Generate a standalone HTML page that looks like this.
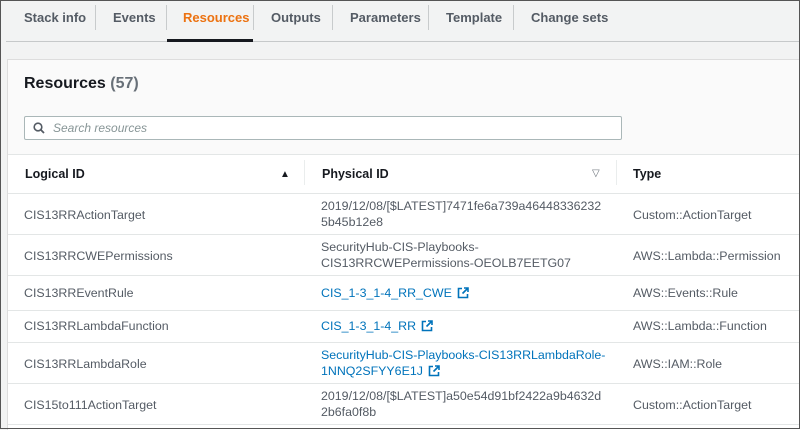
<html><head><style>
body{margin:0;width:800px;height:429px;overflow:hidden;background:#f2f3f3;font-family:"Liberation Sans",sans-serif;position:relative}
.frame{position:absolute;left:0;top:0;width:798px;height:427px;border:1px solid #555;}
.tab{position:absolute;top:10px;font-size:13px;font-weight:bold;color:#545b64}
.sep{position:absolute;top:5px;width:1px;height:25px;background:#c8cbcc}
.card{position:absolute;left:7px;top:59px;width:793px;height:370px;background:#fff;border-left:1px solid #ddd;border-top:1px solid #ddd}
.hdr{position:absolute;left:0;top:0;width:793px;height:95px;background:#fafafa}
.t{position:absolute;font-size:12.4px;color:#545b64;line-height:16px}
.a{color:#0073bb}
.h{position:absolute;font-size:12.5px;font-weight:bold;color:#16191f;top:107px}
.line{position:absolute;left:0;width:793px;height:1px;background:#e3e6e6}
svg.ext{vertical-align:-2px;margin-left:5px}
</style></head><body>
<div class="tab" style="left:24px">Stack info</div><div class="sep" style="left:95px"></div>
<div class="tab" style="left:113px">Events</div><div class="sep" style="left:166px"></div>
<div class="tab" style="left:183px;color:#ec7211">Resources</div><div class="sep" style="left:253px"></div>
<div class="tab" style="left:271px">Outputs</div><div class="sep" style="left:332px"></div>
<div class="tab" style="left:350px">Parameters</div><div class="sep" style="left:428px"></div>
<div class="tab" style="left:446px">Template</div><div class="sep" style="left:513px"></div>
<div class="tab" style="left:531px">Change sets</div>
<div style="position:absolute;left:6px;top:41px;width:794px;height:1px;background:#c6c9ca"></div>
<div style="position:absolute;left:167px;top:39px;width:86px;height:3px;background:#16191f"></div>
<div class="card">
<div class="hdr"></div>
<div style="position:absolute;left:16px;top:15px;font-size:16px;font-weight:bold;color:#16191f">Resources <span style="color:#687078">(57)</span></div>
<div style="position:absolute;left:16px;top:56px;width:596px;height:22px;border:1px solid #aab7b8;background:#fff;border-radius:2px">
<svg style="position:absolute;left:8px;top:5px" width="12" height="12" viewBox="0 0 12 12"><circle cx="5" cy="5" r="3.8" fill="none" stroke="#545b64" stroke-width="1.6"/><path d="M8 8l3 3" stroke="#545b64" stroke-width="1.8"/></svg>
<span style="position:absolute;left:28px;top:4px;font-size:12px;font-style:italic;color:#879596">Search resources</span></div>
<div class="line" style="top:94px"></div>
<div class="h" style="left:17px">Logical ID</div>
<div style="position:absolute;left:272px;top:109px;font-size:10px;color:#16191f">▲</div>
<div style="position:absolute;left:296px;top:100px;width:1px;height:25px;background:#eaeded"></div>
<div class="h" style="left:314px">Physical ID</div>
<div style="position:absolute;left:584px;top:108px;font-size:10px;color:#687078">▽</div>
<div style="position:absolute;left:608px;top:100px;width:1px;height:25px;background:#eaeded"></div>
<div class="h" style="left:625px">Type</div>
<div class="line" style="top:133px"></div>
<div class="t" style="left:16px;top:147px">CIS13RRActionTarget</div>
<div class="t" style="left:313px;top:138px">2019/12/08/[$LATEST]7471fe6a739a46448336232<br>5b45b12e8</div>
<div class="t" style="left:625px;top:147px">Custom::ActionTarget</div>
<div class="line" style="top:174px"></div>
<div class="t" style="left:16px;top:188px">CIS13RRCWEPermissions</div>
<div class="t" style="left:313px;top:179px">SecurityHub-CIS-Playbooks-<br>CIS13RRCWEPermissions-OEOLB7EETG07</div>
<div class="t" style="left:625px;top:188px">AWS::Lambda::Permission</div>
<div class="line" style="top:215px"></div>
<div class="t" style="left:16px;top:225px">CIS13RREventRule</div>
<div class="t a" style="left:313px;top:225px">CIS_1-3_1-4_RR_CWE<svg class="ext" width="12" height="12" viewBox="0 0 12 12"><path d="M5 1.5H1.5v9h9V7M7 1h4v4M11 1L5.5 6.5" fill="none" stroke="#0073bb" stroke-width="1.6"/></svg></div>
<div class="t" style="left:625px;top:225px">AWS::Events::Rule</div>
<div class="line" style="top:250px"></div>
<div class="t" style="left:16px;top:258px">CIS13RRLambdaFunction</div>
<div class="t a" style="left:313px;top:258px">CIS_1-3_1-4_RR<svg class="ext" width="12" height="12" viewBox="0 0 12 12"><path d="M5 1.5H1.5v9h9V7M7 1h4v4M11 1L5.5 6.5" fill="none" stroke="#0073bb" stroke-width="1.6"/></svg></div>
<div class="t" style="left:625px;top:258px">AWS::Lambda::Function</div>
<div class="line" style="top:282px"></div>
<div class="t" style="left:16px;top:296px">CIS13RRLambdaRole</div>
<div class="t a" style="left:313px;top:287px">SecurityHub-CIS-Playbooks-CIS13RRLambdaRole-<br>1NNQ2SFYY6E1J<svg class="ext" width="12" height="12" viewBox="0 0 12 12"><path d="M5 1.5H1.5v9h9V7M7 1h4v4M11 1L5.5 6.5" fill="none" stroke="#0073bb" stroke-width="1.6"/></svg></div>
<div class="t" style="left:625px;top:296px">AWS::IAM::Role</div>
<div class="line" style="top:323px"></div>
<div class="t" style="left:16px;top:337px">CIS15to111ActionTarget</div>
<div class="t" style="left:313px;top:328px">2019/12/08/[$LATEST]a50e54d91bf2422a9b4632d<br>2b6fa0f8b</div>
<div class="t" style="left:625px;top:337px">Custom::ActionTarget</div>
<div class="line" style="top:364px"></div>
</div>
<div class="frame"></div>
</body></html>
